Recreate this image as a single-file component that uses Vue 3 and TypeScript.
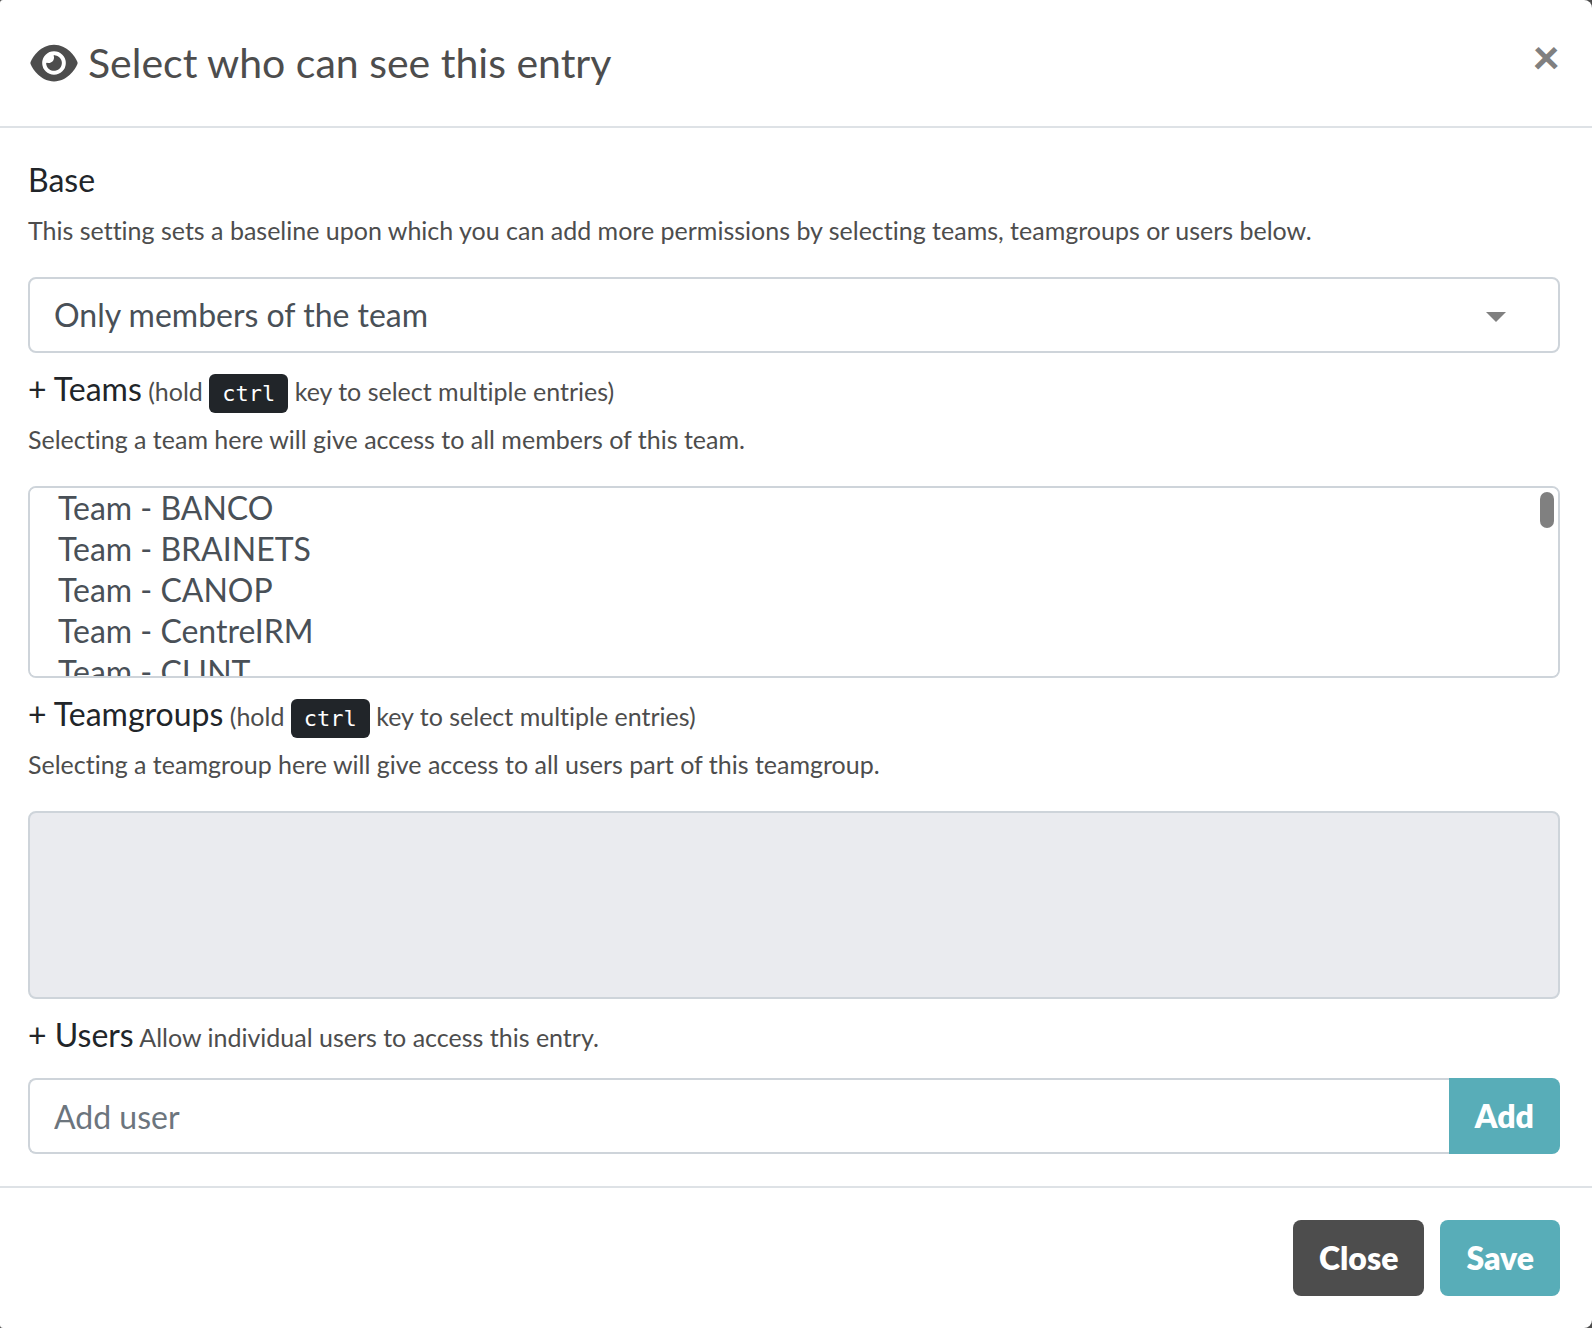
<script setup lang="ts">
import { ref } from 'vue'

const base = ref('team')
const user = ref('')
const selectedTeams = ref<string[]>([])
const selectedGroups = ref<string[]>([])
const teams: string[] = ['BANCO', 'BRAINETS', 'CANOP', 'CentreIRM', 'CLINT']
</script>

<template>
  <div class="modal" role="dialog" aria-labelledby="modal-title">
    <header class="modal-header">
      <h1 id="modal-title" class="title">
        <svg class="eye" viewBox="0 0 576 512" aria-hidden="true">
          <path
            fill="currentColor"
            d="M288 32c-80.8 0-145.5 36.8-192.6 80.6C48.6 156 17.3 208 2.5 243.7c-3.3 7.9-3.3 16.7 0 24.6C17.3 304 48.6 356 95.4 399.4C142.5 443.2 207.2 480 288 480s145.5-36.8 192.6-80.6c46.8-43.5 78.1-95.4 93-131.1c3.3-7.9 3.3-16.7 0-24.6c-14.9-35.7-46.2-87.7-93-131.1C433.5 68.8 368.8 32 288 32zM144 256a144 144 0 1 1 288 0 144 144 0 1 1 -288 0zm144-64c0 35.3-28.7 64-64 64c-7.1 0-13.9-1.2-20.3-3.3c-5.5-1.8-11.9 1.6-11.7 7.4c.3 6.9 1.3 13.8 3.2 20.7c13.7 51.2 66.4 81.6 117.6 67.9s81.6-66.4 67.9-117.6c-11.1-41.5-47.8-69.4-88.6-71.1c-5.8-.2-9.2 6.1-7.4 11.7c2.1 6.4 3.3 13.2 3.3 20.3z"
          />
        </svg>
        <span>Select who can see this entry</span>
      </h1>
      <button type="button" class="dismiss" aria-label="Close dialog">×</button>
    </header>

    <main class="modal-body">
      <section class="group">
        <div class="heading"><label for="base">Base</label></div>
        <p class="hint">
          This setting sets a baseline upon which you can add more permissions by selecting teams,
          teamgroups or users below.
        </p>
        <div class="control">
          <select id="base" v-model="base" class="field dropdown">
            <option value="team">Only members of the team</option>
          </select>
          <svg class="caret" viewBox="0 0 20 10" aria-hidden="true">
            <path fill="#808080" d="M0 0h20L10 10z" />
          </svg>
        </div>
      </section>

      <section class="group">
        <div class="heading">
          <label for="teams">+ Teams</label>
          <small> (hold <kbd>ctrl</kbd> key to select multiple entries)</small>
        </div>
        <p class="hint">Selecting a team here will give access to all members of this team.</p>
        <div class="control">
          <select id="teams" v-model="selectedTeams" class="field listbox" multiple>
            <option v-for="team in teams" :key="team" :value="team">Team - {{ team }}</option>
          </select>
          <span class="thumb" aria-hidden="true"></span>
        </div>
      </section>

      <section class="group">
        <div class="heading">
          <label for="teamgroups">+ Teamgroups</label>
          <small> (hold <kbd>ctrl</kbd> key to select multiple entries)</small>
        </div>
        <p class="hint">
          Selecting a teamgroup here will give access to all users part of this teamgroup.
        </p>
        <div class="control">
          <select
            id="teamgroups"
            v-model="selectedGroups"
            class="field listbox empty"
            multiple
            disabled
          ></select>
        </div>
      </section>

      <section class="group">
        <div class="heading users">
          <label for="user">+ Users</label>
          <small> Allow individual users to access this entry.</small>
        </div>
        <div class="input-group">
          <input id="user" v-model="user" class="field" type="text" placeholder="Add user" />
          <button type="button" class="btn primary append">Add</button>
        </div>
      </section>
    </main>

    <footer class="modal-footer">
      <button type="button" class="btn secondary">Close</button>
      <button type="button" class="btn primary">Save</button>
    </footer>
  </div>
</template>

<style>
body {
  margin: 0;
  background: #4d4d4d;
}
</style>

<style scoped>
.modal,
.modal * {
  box-sizing: border-box;
}

.modal {
  overflow: hidden;
  border-radius: 3px 8px 8px 3px;
  background: #fff;
  color: #212529;
  font-family: Lato, 'Liberation Sans', sans-serif;
  font-size: 32px;
  font-variant-ligatures: none;
  line-height: 48px;
}

.modal-header {
  display: flex;
  justify-content: space-between;
  align-items: flex-start;
  padding: 32px 32px 32px 30px;
  border-bottom: 2px solid #dee2e6;
}

.title {
  display: flex;
  align-items: center;
  gap: 10px;
  margin: 0;
  color: #4d4d4d;
  font-size: 41px;
  font-weight: 400;
  line-height: 62px;
}

.eye {
  width: 48px;
  height: 42px;
}

.dismiss {
  padding: 0;
  border: 0;
  background: none;
  color: #808080;
  font: 900 48px/48px Lato, 'Liberation Sans', sans-serif;
}

.modal-body {
  padding: 28px 32px 32px 28px;
}

.group + .group {
  margin-top: 12px;
}

.heading {
  height: 48px;
}

.heading.users {
  margin-bottom: 19px;
}

small {
  color: #4d4d4d;
  font-size: 25px;
  line-height: 1;
}

kbd {
  padding: 7px 13px;
  border-radius: 6px;
  background: #212529;
  color: #fff;
  font-family: 'DejaVu Sans Mono', monospace;
  font-size: 22px;
  line-height: 1;
}

.hint {
  margin: 7px 0 28px;
  color: #4d4d4d;
  font-size: 25px;
  line-height: 38px;
}

.control {
  position: relative;
  display: flex;
}

.field {
  width: 100%;
  height: 76px;
  margin: 0;
  padding: 0 24px;
  border: 2px solid #ced4da;
  border-radius: 8px;
  outline: 0;
  background: #fff;
  color: #495057;
  font: 400 32px/48px Lato, 'Liberation Sans', sans-serif;
}

.field::placeholder {
  color: #6c757d;
  opacity: 1;
}

.dropdown {
  appearance: none;
}

.caret {
  position: absolute;
  top: 35px;
  right: 54px;
  width: 20px;
  height: 10px;
  pointer-events: none;
}

.listbox {
  height: 192px;
  padding: 0 24px;
  overflow-y: auto;
  scrollbar-width: none;
}

.listbox option {
  min-height: 41px;
  padding: 0 4px;
  line-height: 41px;
}

.listbox.empty {
  height: 188px;
  background: #eaebef;
  opacity: 1;
}

.thumb {
  position: absolute;
  top: 6px;
  right: 6px;
  width: 14px;
  height: 36px;
  border-radius: 7px;
  background: #808080;
  pointer-events: none;
}

.input-group {
  display: flex;
}

.input-group .field {
  flex: 1;
  min-width: 0;
  border-right: 0;
  border-radius: 8px 0 0 8px;
}

.btn {
  height: 76px;
  padding: 0 26px;
  border: 0;
  border-radius: 8px;
  color: #fff;
  font: 800 32px/48px Lato, 'Liberation Sans', sans-serif;
}

.primary {
  background: #58adb8;
}

.secondary {
  background: #4d4d4d;
}

.append {
  border-radius: 0 8px 8px 0;
}

.modal-footer {
  display: flex;
  justify-content: flex-end;
  gap: 16px;
  padding: 32px;
  border-top: 2px solid #dee2e6;
}
</style>
